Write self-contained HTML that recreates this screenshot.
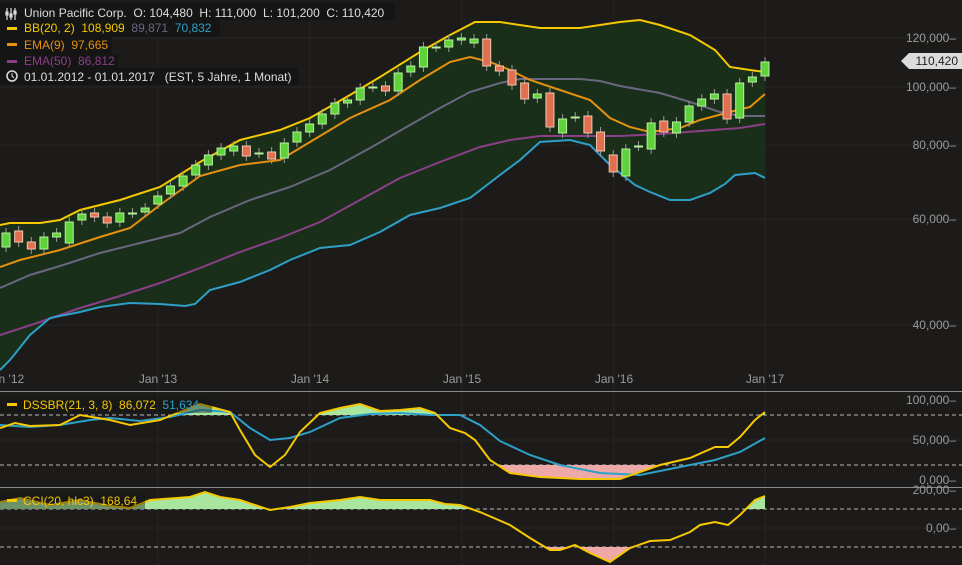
<!DOCTYPE html><html><head><meta charset="utf-8"><style>
body{margin:0;background:#1c1b1a;width:962px;height:565px;overflow:hidden;font-family:"Liberation Sans",sans-serif}
svg{display:block}
text{font-family:"Liberation Sans",sans-serif;font-size:12px;white-space:pre}
</style></head><body>
<svg id="s" width="962" height="565" xmlns="http://www.w3.org/2000/svg" xml:space="preserve">
<rect width="962" height="565" fill="#1c1b1a"/>
<defs>
<clipPath id="a1"><rect x="0" y="392" width="962" height="23"/></clipPath>
<clipPath id="b1"><rect x="0" y="465" width="962" height="22"/></clipPath>
<clipPath id="a2"><rect x="0" y="488" width="962" height="21"/></clipPath>
<clipPath id="b2"><rect x="0" y="547" width="962" height="20"/></clipPath>
</defs>
<g stroke="#262524" stroke-width="1">
<line x1="0" y1="38" x2="962" y2="38"/><line x1="0" y1="87" x2="962" y2="87"/><line x1="0" y1="145" x2="962" y2="145"/><line x1="0" y1="219" x2="962" y2="219"/><line x1="0" y1="325" x2="962" y2="325"/>
<line x1="158" y1="0" x2="158" y2="565"/><line x1="310" y1="0" x2="310" y2="565"/><line x1="462" y1="0" x2="462" y2="565"/><line x1="614" y1="0" x2="614" y2="565"/><line x1="765" y1="0" x2="765" y2="565"/>
<line x1="0" y1="440" x2="962" y2="440"/><line x1="0" y1="528" x2="962" y2="528"/>
</g>
<polygon id="band" fill="#1a2f19"/>
<g id="lines" fill="none" stroke-width="2"></g>
<g id="candles"></g>
<line x1="0" y1="391.5" x2="962" y2="391.5" stroke="#8a8a8a"/>
<line x1="0" y1="487.5" x2="962" y2="487.5" stroke="#8a8a8a"/>
<g stroke="#bbb" stroke-dasharray="4,3"><line x1="0" y1="415" x2="962" y2="415"/><line x1="0" y1="465" x2="962" y2="465"/><line x1="0" y1="509" x2="962" y2="509"/><line x1="0" y1="547" x2="962" y2="547"/></g>
<g id="ind"></g>
<g fill="#9a9a9a" text-anchor="end">
<text x="956" y="42">120,000–</text><text x="956" y="91">100,000–</text><text x="956" y="149">80,000–</text><text x="956" y="223">60,000–</text><text x="956" y="329">40,000–</text>
<text x="956" y="404">100,000–</text><text x="956" y="444">50,000–</text><text x="956" y="484">0,000–</text>
<text x="956" y="494">200,00–</text><text x="956" y="532">0,00–</text>
</g>
<g fill="#9a9a9a" text-anchor="middle"><text x="8" y="383">an '12</text><text x="158" y="383">Jan '13</text><text x="310" y="383">Jan '14</text><text x="462" y="383">Jan '15</text><text x="614" y="383">Jan '16</text><text x="765" y="383">Jan '17</text></g>
<polygon points="901,61 909,53 962,53 962,69 909,69" fill="#dcdcdc"/>
<text x="958" y="65" text-anchor="end" fill="#222">110,420</text>
<rect x="0" y="3" width="395" height="17" fill="#151515"/><rect x="0" y="20" width="220" height="17" fill="#151515"/><rect x="0" y="37" width="112" height="17" fill="#151515"/><rect x="0" y="54" width="118" height="15" fill="#151515"/><rect x="0" y="68" width="298" height="17" fill="#151515"/>
<g stroke="#ddd" stroke-width="1.2" fill="none"><path d="M7 8v12M11 8v12M15 8v12"/><rect x="6" y="12" width="2" height="3"/><rect x="10" y="14" width="2" height="3"/><rect x="14" y="11" width="2" height="3"/></g>
<text x="24" y="17" fill="#ddd">Union Pacific Corp.  O: 104,480  H: 111,000  L: 101,200  C: 110,420</text>
<rect x="7" y="27" width="10" height="3" fill="#f5c800"/><text x="24" y="32" fill="#f5c800">BB(20, 2)  108,909  <tspan fill="#6a6680">89,871</tspan>  <tspan fill="#2ea0c8">70,832</tspan></text>
<rect x="7" y="43" width="10" height="3" fill="#e59010"/><text x="24" y="49" fill="#e59010">EMA(9)  97,665</text>
<rect x="7" y="60" width="10" height="3" fill="#8a3f88"/><text x="24" y="65" fill="#8a3f88">EMA(50)  86,812</text>
<circle cx="12" cy="76" r="5" fill="none" stroke="#ddd" stroke-width="1.5"/><path d="M12 73v3l2 2" stroke="#ddd" fill="none"/>
<text x="24" y="81" fill="#ddd">01.01.2012 - 01.01.2017   (EST, 5 Jahre, 1 Monat)</text>
<rect x="0" y="397" width="212" height="16" fill="#151515" opacity=".4"/>
<rect x="7" y="403" width="10" height="3" fill="#f5c800"/><text x="23" y="409" fill="#f5c800">DSSBR(21, 3, 8)  86,072  <tspan fill="#2ea0c8">51,634</tspan></text>
<rect x="0" y="493" width="145" height="16" fill="#151515" opacity=".4"/>
<rect x="7" y="499" width="10" height="3" fill="#f5c800"/><text x="23" y="505" fill="#f5c800">CCI(20, hlc3)  168,64</text>
</svg>
<script>
const NS="http://www.w3.org/2000/svg";
function el(t,a,p){const e=document.createElementNS(NS,t);for(const k in a)e.setAttribute(k,a[k]);document.getElementById(p).appendChild(e);return e}
const P=a=>a.map(p=>p.join(",")).join(" ");
const up=[[0,225],[10,223],[40,223],[60,220],[80,210],[120,200],[160,187],[200,162],[240,140],[280,130],[310,118],[350,95],[380,77],[420,52],[450,35],[475,22],[500,22],[540,28],[580,28],[620,22],[640,20],[660,25],[690,35],[715,50],[730,67],[750,70],[765,72]];
const lo=[[0,370],[10,360],[30,335],[50,318],[80,312],[100,307],[130,303],[160,304],[185,306],[195,304],[210,290],[240,282],[270,270],[290,260],[320,248],[350,245],[380,232],[410,215],[440,208],[470,198],[500,175],[520,160],[540,142],[570,140],[590,145],[610,165],[635,185],[650,192],[670,200],[690,200],[710,193],[725,184],[735,175],[755,173],[765,178]];
const mid=[[0,288],[30,275],[60,266],[100,253],[140,243],[180,233],[210,217],[250,200],[290,187],[330,170],[370,148],[410,125],[440,108],[470,92],[500,83],[520,79],[580,79],[600,81],[620,86],[660,93],[690,102],[720,112],[740,116],[765,116]];
const e9=[[0,267],[20,260],[60,250],[100,237],[130,228],[160,205],[200,176],[240,165],[280,160],[310,142],[350,118],[390,100],[420,80],[450,62],[470,57],[490,62],[510,70],[530,80],[560,90],[590,100],[610,118],[630,127],[650,132],[680,128],[700,120],[730,112],[750,107],[765,94]];
const e50=[[0,335],[40,322],[80,308],[120,296],[160,283],[200,268],[240,252],[280,238],[320,222],[360,200],[400,178],[440,162],[480,147],[510,140],[540,136],[580,136],[620,136],[660,134],[700,131],[740,128],[765,124]];
document.getElementById("band").setAttribute("points",P(up.concat(lo.slice().reverse())));
[[mid,"#6a6680"],[e50,"#8a3f88"],[e9,"#e59010"],[lo,"#2ea0c8"],[up,"#f5c800"]].forEach(([d,c])=>el("polyline",{points:P(d),stroke:c},"lines"));
const C=[[247,233],[231,242],[242,249],[249,237],[237,233],[243,222],[220,214],[213,217],[217,223],[222,213],[213,213],[212,208],[204,196],[194,186],[186,176],[175,165],[165,155],[155,148],[151,146],[146,156],[153,153],[152,159],[158,143],[142,132],[132,124],[124,114],[114,103],[103,100],[100,88],[87,87],[86,91],[91,73],[72,66],[67,47],[47,47],[47,40],[40,38],[43,39],[39,66],[66,71],[70,85],[83,99],[98,94],[93,127],[133,119],[117,117],[116,133],[132,151],[155,172],[176,149],[146,146],[149,123],[121,132],[133,122],[122,106],[106,99],[99,94],[94,119],[118,83],[82,77],[76,62]];
C.forEach((c,i)=>{const x=6+i*12.65,[o,cl]=c,g=cl<=o;const t=Math.min(o,cl),b=Math.max(o,cl);
el("line",{x1:x,x2:x,y1:t-5,y2:b+5,stroke:"#999"},"candles");
el("rect",{x:x-4,y:t,width:8,height:Math.max(b-t,1),fill:g?"#5fd13a":"#e07050",stroke:g?"#b8f0a0":"#f3c4b4"},"candles");});
const d1=[[0,428],[15,423],[30,426],[60,425],[80,415],[110,420],[130,425],[160,420],[185,410],[200,404],[215,408],[230,412],[240,430],[255,455],[270,467],[285,455],[300,432],[320,413],[340,408],[360,404],[380,411],[400,410],[420,408],[435,413],[450,428],[465,433],[475,440],[490,460],[510,473],[540,477],[580,479],[620,479],[640,472],[660,465],[690,458],[715,447],[728,447],[740,437],[755,420],[765,412]];
const d2=[[0,425],[30,427],[60,425],[90,420],[110,418],[140,421],[170,417],[200,410],[230,412],[250,428],[270,440],[290,438],[310,432],[340,418],[370,414],[400,413],[430,415],[460,415],[480,425],[500,441],[530,455],[560,465],[600,473],[640,475],[680,467],[715,460],[740,452],[765,438]];
const cc=[[0,502],[20,498],[50,505],[80,500],[110,506],[130,508],[150,500],[190,497],[205,492],[220,497],[240,500],[255,505],[270,510],[290,507],[310,503],[340,500],[360,497],[380,500],[410,500],[430,500],[445,504],[460,505],[480,512],[510,525],[530,538],[550,550],[560,550],[575,545],[590,553],[610,562],[630,548],[650,541],[670,540],[690,532],[700,525],[715,522],[728,525],[740,515],[755,500],[765,496]];
function fill(d,lv,clip,col){el("polygon",{points:P(d.concat([[765,lv],[0,lv]])),fill:col,"clip-path":"url(#"+clip+")"},"ind")}
fill(d1,415,"a1","#a8e6a0");fill(d1,465,"b1","#eea8a8");fill(cc,509,"a2","#a8e6a0");fill(cc,547,"b2","#eea8a8");
el("polyline",{points:P(d2),stroke:"#2ea0c8",fill:"none","stroke-width":2},"ind");
el("polyline",{points:P(d1),stroke:"#f5c800",fill:"none","stroke-width":2},"ind");
el("polyline",{points:P(cc),stroke:"#f5c800",fill:"none","stroke-width":2},"ind");
</script>
</body></html>
